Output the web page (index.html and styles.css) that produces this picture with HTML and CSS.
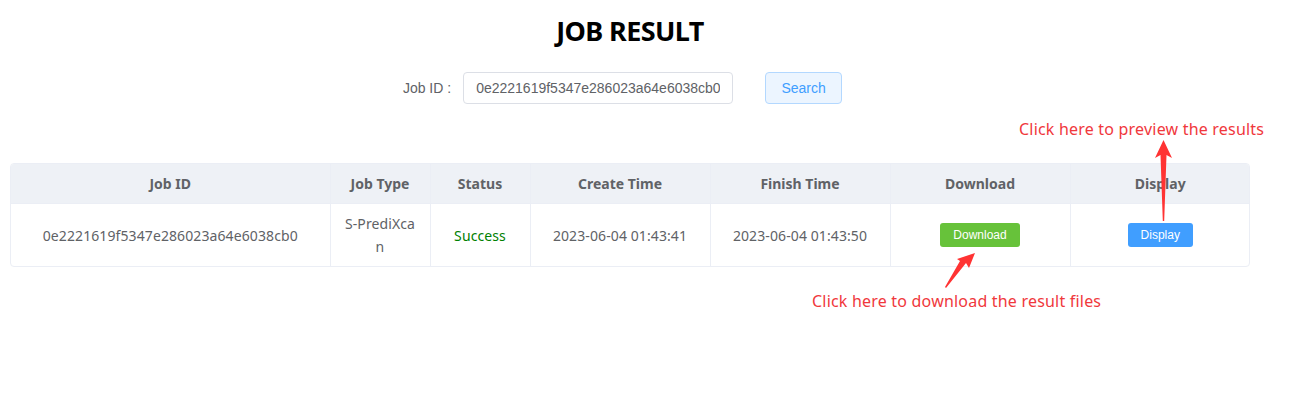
FILE: index.html
```html
<!DOCTYPE html>
<html lang="en">
<head>
<meta charset="utf-8">
<title>Job Result</title>
<link rel="stylesheet" href="styles.css">
</head>
<body>
<div class="page">
  <h1 class="title">JOB RESULT</h1>
  <form class="search-form">
    <div class="form-item">
      <label class="form-label">Job ID :</label>
      <input class="form-input" type="text" value="0e2221619f5347e286023a64e6038cb0">
    </div>
    <div class="form-item">
      <button type="button" class="btn-search">Search</button>
    </div>
  </form>
  <div class="table-wrap">
    <table class="result-table">
      <colgroup>
        <col class="c-id"><col class="c-type"><col class="c-status"><col class="c-time"><col class="c-time"><col class="c-time"><col class="c-time">
      </colgroup>
      <thead>
        <tr>
          <th>Job ID</th><th>Job Type</th><th>Status</th><th>Create Time</th><th>Finish Time</th><th>Download</th><th>Display</th>
        </tr>
      </thead>
      <tbody>
        <tr>
          <td>0e2221619f5347e286023a64e6038cb0</td>
          <td class="wrap">S-PrediXcan</td>
          <td class="success">Success</td>
          <td>2023-06-04 01:43:41</td>
          <td>2023-06-04 01:43:50</td>
          <td><button type="button" class="btn btn-green">Download</button></td>
          <td><button type="button" class="btn btn-blue">Display</button></td>
        </tr>
      </tbody>
    </table>
  </div>

  <div class="note note-preview">Click here to preview the results</div>
  <div class="note note-download">Click here to download the result files</div>
  <svg class="arrows" width="1300" height="408" viewBox="0 0 1300 408">
    <polygon fill="#ff3333" points="1163.5,140 1172,158 1166.5,155 1164.2,221 1162.8,221 1160.5,155 1155,158"/>
    <polygon fill="#ff3333" points="975,253 969,268 966,263 946,288 945,287 960,261 957,259"/>
  </svg>
</div>
</body>
</html>
```

FILE: styles.css
```css
html, body {
  margin: 0;
  padding: 0;
  background: #ffffff;
}

.page {
  position: relative;
  width: 1240px;
  height: 408px;
  padding: 0 10px;
  font-family: "Noto Sans", "Liberation Sans", sans-serif;
  color: #606266;
}

.title {
  margin: 0;
  padding-top: 12px;
  text-align: center;
  font-size: 27px;
  line-height: 38px;
  font-weight: 700;
  color: #000;
  letter-spacing: -0.6px;
}

.search-form {
  display: flex;
  justify-content: center;
  align-items: center;
  margin-top: 22px;
  padding-left: 0;
}

.form-item {
  display: flex;
  align-items: center;
  margin-right: 16px;
}

.form-item + .form-item {
  margin-left: 16px;
  margin-right: 15px;
}

.form-label {
  font-family: "Liberation Sans", Arial, sans-serif;
  font-size: 14px;
  color: #606266;
  padding-right: 12px;
}

.form-input {
  box-sizing: border-box;
  width: 270px;
  height: 32px;
  border: 1px solid #dcdfe6;
  border-radius: 4px;
  padding: 0 12px;
  font-family: "Liberation Sans", Arial, sans-serif;
  font-size: 14px;
  color: #606266;
  outline: none;
}

.btn-search {
  box-sizing: border-box;
  width: 77px;
  height: 32px;
  border: 1px solid #b3d8ff;
  background: #ecf5ff;
  color: #409eff;
  border-radius: 4px;
  font-family: "Liberation Sans", Arial, sans-serif;
  font-size: 14px;
  padding: 0;
}

.table-wrap {
  margin-top: 59px;
  border: 1px solid #ebeef5;
  border-radius: 4px;
  overflow: hidden;
  width: 1238px;
}

.result-table {
  width: 1238px;
  border-collapse: collapse;
  table-layout: fixed;
  font-size: 14px;
}

.c-id { width: 319px; }
.c-type { width: 100px; }
.c-status { width: 100px; }
.c-time { width: 180px; }

.result-table th,
.result-table td {
  text-align: center;
  vertical-align: middle;
  padding: 8px 10px;
  line-height: 23px;
  border-right: 1px solid #ebeef5;
}

.result-table th:last-child,
.result-table td:last-child {
  border-right: none;
}

.result-table th {
  background: #eef1f6;
  color: #606266;
  font-weight: 700;
  height: 23px;
  border-bottom: 1px solid #ebeef5;
}

.result-table td {
  color: #606266;
  letter-spacing: 0.1px;
}

.result-table td.wrap {
  word-break: break-all;
  padding-left: 14px;
  padding-right: 14px;
}

.result-table td.success {
  color: #008000;
}

.btn {
  display: block;
  margin: 0 auto;
  box-sizing: border-box;
  height: 24px;
  padding: 0 13px;
  border: none;
  border-radius: 3px;
  color: #fff;
  font-family: "Liberation Sans", Arial, sans-serif;
  font-size: 12px;
  letter-spacing: 0;
}

.btn-green { background: #67c23a; }
.btn-blue { background: #409eff; }

.note {
  position: absolute;
  font-size: 16px;
  line-height: 20px;
  letter-spacing: 0.2px;
  color: #f0383c;
  white-space: nowrap;
}

.note-preview {
  left: 1019px;
  top: 119px;
}

.note-download {
  left: 812px;
  top: 291px;
}

.arrows {
  position: absolute;
  left: 0;
  top: 0;
  pointer-events: none;
}
```
